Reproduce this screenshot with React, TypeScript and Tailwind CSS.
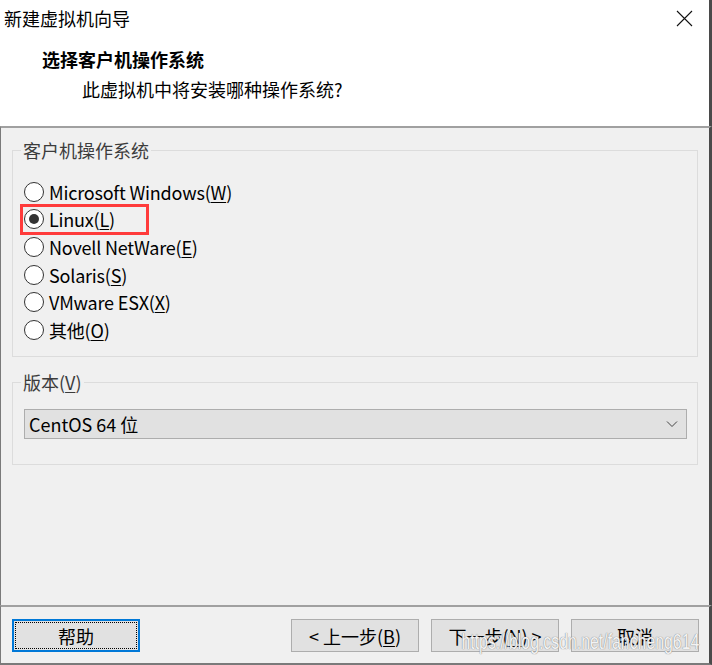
import React from 'react';

const OS_OPTIONS = [
  { label: 'Microsoft Windows', key: 'W' },
  { label: 'Linux', key: 'L' },
  { label: 'Novell NetWare', key: 'E' },
  { label: 'Solaris', key: 'S' },
  { label: 'VMware ESX', key: 'X' },
  { label: '其他', key: 'O' },
];

function Radio({ checked }: { checked?: boolean }) {
  return (
    <span className="flex h-[20px] w-[20px] shrink-0 items-center justify-center rounded-full border border-[#333333] bg-white">
      {checked && <span className="h-[10px] w-[10px] rounded-full bg-[#333333]" />}
    </span>
  );
}

function Mnemonic({ label, k }: { label: string; k: string }) {
  return (
    <span>
      {label}(<span className="underline underline-offset-2">{k}</span>)
    </span>
  );
}

function Button({ children, focused }: { children: React.ReactNode; focused?: boolean }) {
  return (
    <button
      className={
        focused
          ? 'flex h-[33px] w-[128px] items-center justify-center border-2 border-[#0078d7] bg-[#e1e1e1] p-px'
          : 'flex h-[33px] w-[128px] items-center justify-center whitespace-nowrap border border-[#adadad] bg-[#e1e1e1]'
      }
    >
      {focused ? (
        <span className="flex h-full w-full items-center justify-center border border-dotted border-black">
          {children}
        </span>
      ) : (
        children
      )}
    </button>
  );
}

export default function App() {
  return (
    <div
      className="flex h-[665px] w-[712px] flex-col bg-[#f0f0f0] text-[18px] leading-none text-black"
      style={{ fontFamily: '"Noto Sans CJK SC", "Noto Sans", sans-serif' }}
    >
      {/* title + header */}
      <div className="h-[126px] border-r-[3px] border-r-[#4a4a4a] bg-white">
        <div className="flex h-[38px] items-center justify-between pl-[4px] pr-[16px]">
          <span className="pb-[2px]">新建虚拟机向导</span>
          <svg width="17" height="17" viewBox="0 0 17 17" className="mb-[2px]">
            <path d="M1 1 L16 16 M16 1 L1 16" stroke="#111" strokeWidth="1.1" fill="none" />
          </svg>
        </div>
        <div className="pl-[42px] pt-[12px] font-bold">选择客户机操作系统</div>
        <div className="pl-[82px] pt-[12px]">此虚拟机中将安装哪种操作系统?</div>
      </div>

      {/* body */}
      <div className="flex flex-1 flex-col border-l border-r-[3px] border-t-2 border-l-[#7a7a7a] border-r-[#4a4a4a] border-t-[#a0a0a0] px-[11px] pt-[13px]">
        <fieldset className="h-[216px] border border-[#dcdcdc] pl-[11px] pr-[8px]">
          <legend className="ml-[-3px] px-[2px] text-[#3c3c3c]">客户机操作系统</legend>
          <div className="flex flex-col pt-[19px] tracking-[-0.2px]">
            {OS_OPTIONS.map((o, i) => (
              <div key={o.key} className="flex h-[27.6px] items-center gap-[5px]">
                {i === 1 ? (
                  <div className="-ml-[4px] flex h-[31px] w-[129px] items-center gap-[5px] border-[3px] border-[#ff3b3b] pl-[1px]">
                    <Radio checked />
                    <Mnemonic label={o.label} k={o.key} />
                  </div>
                ) : (
                  <>
                    <Radio />
                    <Mnemonic label={o.label} k={o.key} />
                  </>
                )}
              </div>
            ))}
          </div>
        </fieldset>

        <fieldset className="mt-[16px] h-[92px] border border-[#dcdcdc] pl-[11px] pr-[10px]">
          <legend className="ml-[-3px] px-[2px] text-[#3c3c3c]">
            <Mnemonic label="版本" k="V" />
          </legend>
          <div className="mt-[18px] flex h-[30px] items-center justify-between border border-[#adadad] bg-[#e1e1e1] pl-[4px] pr-[8px]">
            <span>CentOS 64 位</span>
            <svg width="12" height="8" viewBox="0 0 12 8">
              <path d="M1 1.5 L6 6.5 L11 1.5" stroke="#444" strokeWidth="1" fill="none" />
            </svg>
          </div>
        </fieldset>

        <div className="flex-1" />
      </div>

      {/* footer */}
      <div className="relative flex h-[60px] items-start border-b-2 border-l border-r-[3px] border-t-2 border-b-[#7a7a7a] border-l-[#7a7a7a] border-r-[#4a4a4a] border-t-[#a0a0a0] pl-[11px] pt-[12px]">
        <Button focused>帮助</Button>
        <div className="flex-1" />
        <div className="flex gap-[12px] pr-[10px]">
          <Button>
            {'< 上一步('}
            <span className="underline underline-offset-2">B</span>)
          </Button>
          <Button>
            下一步(<span className="underline underline-offset-2">N</span>
            {') >'}
          </Button>
          <Button>取消</Button>
        </div>
        <span
          className="pointer-events-none absolute bottom-[10px] right-[10px] origin-right scale-x-[0.72] whitespace-nowrap text-[22px] text-white/90"
          style={{ fontFamily: '"Liberation Sans", sans-serif', textShadow: '0 0 1px #888, 0 0 1px #888' }}
        >
          https://blog.csdn.net/fancheng614
        </span>
      </div>
    </div>
  );
}
